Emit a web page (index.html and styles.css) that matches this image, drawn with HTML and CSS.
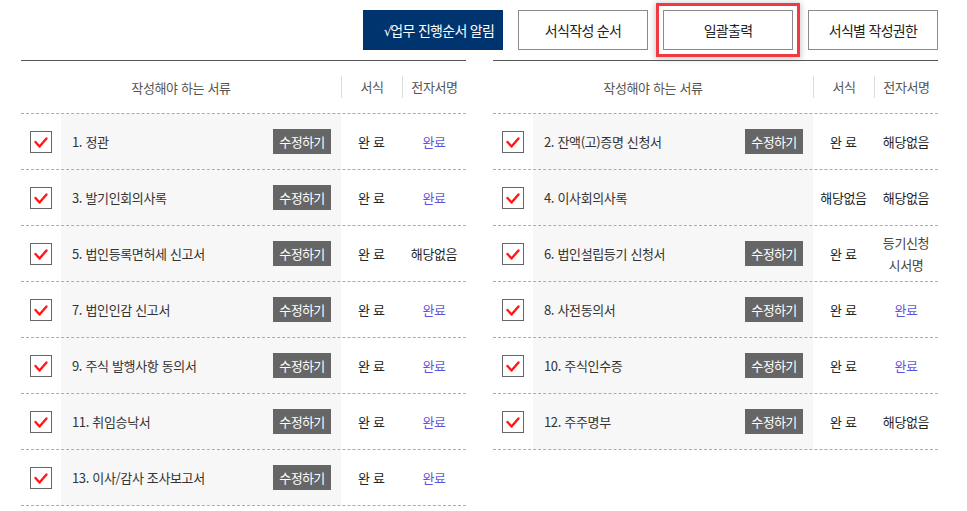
FILE: index.html
```html
<!DOCTYPE html>
<html lang="ko">
<head>
    <meta charset="UTF-8">
    <meta name="viewport" content="width=device-width, initial-scale=1.0">
    <title>서류 작성 현황</title>
    <link rel="stylesheet" href="styles.css">
</head>
<body>
    <div class="wrap">
        <div class="toolbar">
            <button class="btn btn-navy"><span class="tick">√</span>업무 진행순서 알림</button>
            <button class="btn">서식작성 순서</button>
            <button class="btn btn-focus">일괄출력</button>
            <button class="btn">서식별 작성권한</button>
        </div>

        <div class="tables">
            <!-- left list -->
            <div class="doc-list">
                <div class="head">
                    <div class="head-title">작성해야 하는 서류</div>
                    <div class="head-col">서식</div>
                    <div class="head-col">전자서명</div>
                </div>
                <div class="row">
                    <div class="check"><span class="box"><svg width="22" height="22" viewBox="0 0 22 22"><polyline points="5.5,11 9.5,15.5 16.5,7.5"/></svg></span></div>
                    <div class="name"><span>1. 정관</span><button class="edit">수정하기</button></div>
                    <div class="cell spaced">완료</div>
                    <div class="cell link">완료</div>
                </div>
                <div class="row">
                    <div class="check"><span class="box"><svg width="22" height="22" viewBox="0 0 22 22"><polyline points="5.5,11 9.5,15.5 16.5,7.5"/></svg></span></div>
                    <div class="name"><span>3. 발기인회의사록</span><button class="edit">수정하기</button></div>
                    <div class="cell spaced">완료</div>
                    <div class="cell link">완료</div>
                </div>
                <div class="row">
                    <div class="check"><span class="box"><svg width="22" height="22" viewBox="0 0 22 22"><polyline points="5.5,11 9.5,15.5 16.5,7.5"/></svg></span></div>
                    <div class="name"><span>5. 법인등록면허세 신고서</span><button class="edit">수정하기</button></div>
                    <div class="cell spaced">완료</div>
                    <div class="cell">해당없음</div>
                </div>
                <div class="row">
                    <div class="check"><span class="box"><svg width="22" height="22" viewBox="0 0 22 22"><polyline points="5.5,11 9.5,15.5 16.5,7.5"/></svg></span></div>
                    <div class="name"><span>7. 법인인감 신고서</span><button class="edit">수정하기</button></div>
                    <div class="cell spaced">완료</div>
                    <div class="cell link">완료</div>
                </div>
                <div class="row">
                    <div class="check"><span class="box"><svg width="22" height="22" viewBox="0 0 22 22"><polyline points="5.5,11 9.5,15.5 16.5,7.5"/></svg></span></div>
                    <div class="name"><span>9. 주식 발행사항 동의서</span><button class="edit">수정하기</button></div>
                    <div class="cell spaced">완료</div>
                    <div class="cell link">완료</div>
                </div>
                <div class="row">
                    <div class="check"><span class="box"><svg width="22" height="22" viewBox="0 0 22 22"><polyline points="5.5,11 9.5,15.5 16.5,7.5"/></svg></span></div>
                    <div class="name"><span>11. 취임승낙서</span><button class="edit">수정하기</button></div>
                    <div class="cell spaced">완료</div>
                    <div class="cell link">완료</div>
                </div>
                <div class="row">
                    <div class="check"><span class="box"><svg width="22" height="22" viewBox="0 0 22 22"><polyline points="5.5,11 9.5,15.5 16.5,7.5"/></svg></span></div>
                    <div class="name"><span>13. 이사/감사 조사보고서</span><button class="edit">수정하기</button></div>
                    <div class="cell spaced">완료</div>
                    <div class="cell link">완료</div>
                </div>
            </div>

            <!-- right list -->
            <div class="doc-list">
                <div class="head">
                    <div class="head-title">작성해야 하는 서류</div>
                    <div class="head-col">서식</div>
                    <div class="head-col">전자서명</div>
                </div>
                <div class="row">
                    <div class="check"><span class="box"><svg width="22" height="22" viewBox="0 0 22 22"><polyline points="5.5,11 9.5,15.5 16.5,7.5"/></svg></span></div>
                    <div class="name"><span>2. 잔액(고)증명 신청서</span><button class="edit">수정하기</button></div>
                    <div class="cell spaced">완료</div>
                    <div class="cell">해당없음</div>
                </div>
                <div class="row">
                    <div class="check"><span class="box"><svg width="22" height="22" viewBox="0 0 22 22"><polyline points="5.5,11 9.5,15.5 16.5,7.5"/></svg></span></div>
                    <div class="name"><span>4. 이사회의사록</span></div>
                    <div class="cell">해당없음</div>
                    <div class="cell">해당없음</div>
                </div>
                <div class="row">
                    <div class="check"><span class="box"><svg width="22" height="22" viewBox="0 0 22 22"><polyline points="5.5,11 9.5,15.5 16.5,7.5"/></svg></span></div>
                    <div class="name"><span>6. 법인설립등기 신청서</span><button class="edit">수정하기</button></div>
                    <div class="cell spaced">완료</div>
                    <div class="cell two-line">등기신청<br>시서명</div>
                </div>
                <div class="row">
                    <div class="check"><span class="box"><svg width="22" height="22" viewBox="0 0 22 22"><polyline points="5.5,11 9.5,15.5 16.5,7.5"/></svg></span></div>
                    <div class="name"><span>8. 사전동의서</span><button class="edit">수정하기</button></div>
                    <div class="cell spaced">완료</div>
                    <div class="cell link">완료</div>
                </div>
                <div class="row">
                    <div class="check"><span class="box"><svg width="22" height="22" viewBox="0 0 22 22"><polyline points="5.5,11 9.5,15.5 16.5,7.5"/></svg></span></div>
                    <div class="name"><span>10. 주식인수증</span><button class="edit">수정하기</button></div>
                    <div class="cell spaced">완료</div>
                    <div class="cell link">완료</div>
                </div>
                <div class="row">
                    <div class="check"><span class="box"><svg width="22" height="22" viewBox="0 0 22 22"><polyline points="5.5,11 9.5,15.5 16.5,7.5"/></svg></span></div>
                    <div class="name"><span>12. 주주명부</span><button class="edit">수정하기</button></div>
                    <div class="cell spaced">완료</div>
                    <div class="cell">해당없음</div>
                </div>
            </div>
        </div>
    </div>
</body>
</html>
```

FILE: styles.css
```css
body {
    font-family: "Noto Sans CJK KR", "Noto Sans", sans-serif;
    font-size: 13px;
    letter-spacing: -0.35px;
    color: #333;
    margin: 0;
    padding: 0;
    background-color: #fff;
}

.wrap {
    width: 917px;
    margin-left: 21px;
    padding-top: 10px;
}

/* top buttons */
.toolbar {
    display: flex;
    justify-content: flex-end;
    gap: 15px;
    height: 40px;
    margin-bottom: 10px;
}
.btn {
    width: 130px;
    height: 40px;
    padding: 0;
    font-family: inherit;
    font-size: 14px;
    letter-spacing: -0.7px;
    color: #222;
    background: #fff;
    border: 1px solid #8a8a8e;
    cursor: pointer;
}
.btn-navy {
    width: 140px;
    padding-left: 12px;
    background-color: #00346f;
    border-color: #00346f;
    color: #fff;
}
.btn-navy .tick {
    font-family: "DejaVu Sans", sans-serif;
    font-size: 13px;
    margin-right: -1px;
}
/* highlighted one */
.btn-focus {
    box-shadow: 0 0 0 4px #fff, 0 0 0 7px #ee3a40, 0 1px 6px 8px rgba(0, 0, 0, 0.22);
}

/* tables */
.tables {
    display: flex;
    gap: 27px;
    align-items: flex-start;
}
.doc-list {
    width: 445px;
}
.head,
.row {
    display: grid;
    grid-template-columns: 40px 280px 61px 64px;
    box-sizing: border-box;
    border-bottom: 1px dashed #ababab;
}
.head {
    height: 54px;
    border-top: 1px solid #555;
    align-items: center;
    color: #555;
}
.head-title {
    grid-column: span 2;
    text-align: center;
}
.head-col {
    line-height: 22px;
    text-align: center;
    border-left: 1px solid #dcdcdc;
}
.row {
    height: 56px;
}
.check {
    display: flex;
    align-items: center;
    justify-content: center;
}
.box {
    width: 22px;
    height: 22px;
    box-sizing: border-box;
    border: 1px solid #666;
    background: #fff;
    display: flex;
    align-items: center;
    justify-content: center;
}
.box svg {
    flex: none;
}
.box polyline {
    fill: none;
    stroke: #ff1a1a;
    stroke-width: 2.4;
    stroke-linecap: round;
    stroke-linejoin: round;
}
.name {
    display: flex;
    align-items: center;
    justify-content: space-between;
    padding: 0 10px 0 11px;
    background-color: #f7f7f7;
}
.edit {
    width: 58px;
    height: 25px;
    padding: 0;
    font-family: inherit;
    font-size: 13px;
    letter-spacing: -0.6px;
    color: #fff;
    background-color: #666;
    border: none;
    cursor: pointer;
}
.cell {
    display: flex;
    align-items: center;
    justify-content: center;
    text-align: center;
    color: #222;
}
.cell.spaced {
    letter-spacing: 3px;
    padding-left: 3px;
}
.cell.link {
    color: #5f56dc;
}
.cell.two-line {
    line-height: 22px;
    color: #444;
}
```
